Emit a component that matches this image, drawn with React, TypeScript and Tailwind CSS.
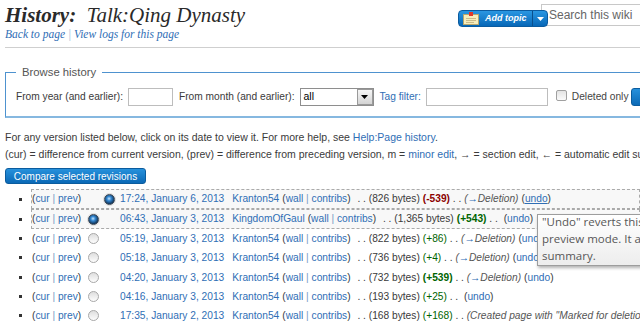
import React from 'react';

type Row = {
  date: string;
  user: string;
  size: string;
  diff: string;
  diffClass: string;
  comment?: 'section' | 'created';
  slots: ['none' | 'on' | 'off', 'none' | 'on' | 'off'];
  selected?: boolean;
  hoverUndo?: boolean;
};

const rows: Row[] = [
  {
    date: '17:24, January 6, 2013',
    user: 'Kranton54',
    size: '826 bytes',
    diff: '-539',
    diffClass: 'font-bold text-[#8b0000]',
    comment: 'section',
    slots: ['none', 'on'],
    selected: true,
    hoverUndo: true,
  },
  {
    date: '06:43, January 3, 2013',
    user: 'KingdomOfGaul',
    size: '1,365 bytes',
    diff: '+543',
    diffClass: 'font-bold text-[#006400]',
    slots: ['on', 'none'],
    selected: true,
  },
  {
    date: '05:19, January 3, 2013',
    user: 'Kranton54',
    size: '822 bytes',
    diff: '+86',
    diffClass: 'text-[#006400]',
    comment: 'section',
    slots: ['off', 'none'],
  },
  {
    date: '05:18, January 3, 2013',
    user: 'Kranton54',
    size: '736 bytes',
    diff: '+4',
    diffClass: 'text-[#006400]',
    comment: 'section',
    slots: ['off', 'none'],
  },
  {
    date: '04:20, January 3, 2013',
    user: 'Kranton54',
    size: '732 bytes',
    diff: '+539',
    diffClass: 'font-bold text-[#006400]',
    comment: 'section',
    slots: ['off', 'none'],
  },
  {
    date: '04:16, January 3, 2013',
    user: 'Kranton54',
    size: '193 bytes',
    diff: '+25',
    diffClass: 'text-[#006400]',
    slots: ['off', 'none'],
  },
  {
    date: '17:35, January 2, 2013',
    user: 'Kranton54',
    size: '168 bytes',
    diff: '+168',
    diffClass: 'text-[#006400]',
    comment: 'created',
    slots: ['off', 'none'],
  },
];

const link = 'text-[#2f6eb5]';

const Radio = ({ state }: { state: 'none' | 'on' | 'off' }) => {
  if (state === 'none') return null;
  if (state === 'on') {
    return (
      <span className="block h-[11px] w-[11px] rounded-full border border-[#3a4654] bg-[image:radial-gradient(circle_at_45%_40%,#c6e6ff_0%,#3488d2_30%,#12385f_70%)] shadow-[0_0_0_1px_#dcdcdc]" />
    );
  }
  return (
    <span className="block h-[11px] w-[11px] rounded-full border border-[#a8a8a8] bg-[image:linear-gradient(#dedede,#fdfdfd)]" />
  );
};

const NoteIcon = () => (
  <svg width="16" height="13" viewBox="0 0 16 13">
    <rect x="0.5" y="2.5" width="15" height="10" fill="#f7edbb" stroke="#b8a66c" />
    <path d="M3 6.5h10M3 8.5h10M3 10.5h8" stroke="#cbbb88" strokeWidth="1" />
    <rect x="6" y="0" width="4" height="4" fill="#e0382a" />
  </svg>
);

const HistoryRow = ({ row }: { row: Row }) => (
  <li className="flex items-center whitespace-nowrap">
    <span className="ml-[19px] mr-[9px] h-[3px] w-[3px] flex-none bg-[#333]" />
    <div
      className={`flex flex-1 items-center border border-dashed ${
        row.selected
          ? 'h-[20px] border-[#aaaaaa] bg-[#f8f8f8]'
          : 'h-[19.3px] border-transparent'
      }`}
    >
      <span className="w-[53px] flex-none">
        (<span className={link}>cur</span> <span className="text-[#7a9cc4]">|</span>{' '}
        <span className={link}>prev</span>)
      </span>
      <span className="flex w-[16px] flex-none justify-center">
        <Radio state={row.slots[0]} />
      </span>
      <span className="flex w-[16px] flex-none justify-center">
        <Radio state={row.slots[1]} />
      </span>
      <span className={`ml-[3px] ${link}`}>{row.date}</span>
      <span className={`ml-[8px] ${link}`}>{row.user}</span>
      <span className="ml-[3px]">
        (<span className={link}>wall</span> <span className="text-[#7a9cc4]">|</span>{' '}
        <span className={link}>contribs</span>)
      </span>
      <span className="ml-[4px] whitespace-pre"> . . </span>
      <span>({row.size})</span>
      <span className={`ml-[3px] ${row.diffClass}`}>({row.diff})</span>
      <span className="whitespace-pre"> . . </span>
      {row.comment === 'section' && (
        <span className="mr-[3px] italic text-[#555]">
          (<span className={link}>→</span>Deletion)
        </span>
      )}
      {row.comment === 'created' && (
        <span className="italic text-[#555]">
          (Created page with "Marked for deletion")
        </span>
      )}
      {row.comment !== 'created' && (
        <span className={row.comment ? '' : 'ml-[3px]'}>
          (<span className={`${link} ${row.hoverUndo ? 'underline' : ''}`}>undo</span>)
        </span>
      )}
    </div>
  </li>
);

export default function App() {
  return (
    <div className="relative h-[328px] w-[640px] overflow-hidden bg-white font-['Liberation_Sans',Arial,sans-serif] text-[10.2px] text-[#3a3a3a]">
      {/* page header */}
      <div className="ml-[5px] flex items-start border-b border-[#cfcfcf] pb-[6px]">
        <div className="flex-none font-['Liberation_Serif',serif] italic">
          <h1 className="mt-[3px] whitespace-nowrap text-[21px] leading-[24px] text-[#2a2a2a]">
            <b>History:</b>&nbsp; Talk:Qing Dynasty
          </h1>
          <div className="whitespace-nowrap text-[11.5px] leading-[14px]">
            <span className={link}>Back to page</span>{' '}
            <span className="text-[#9ab6d6]">|</span>{' '}
            <span className={link}>View logs for this page</span>
          </div>
        </div>

        <div className="ml-auto mr-[-20px] flex flex-none items-start">
          <div className="relative z-10 mt-[10px] flex h-[17px] w-[90px] overflow-hidden rounded-[4px] border border-[#0b5b9f] bg-[image:linear-gradient(#2a97e2,#0767b7)] text-white">
            <div className="flex w-[73px] items-center gap-[6px] whitespace-nowrap pl-[4px]">
              <NoteIcon />
              <span className="text-[9px] font-bold italic">Add topic</span>
            </div>
            <div className="flex flex-1 items-center justify-center border-l border-[#0a4f8c]">
              <svg width="7" height="4" viewBox="0 0 7 4">
                <path d="M0 0h7L3.5 4z" fill="#fff" />
              </svg>
            </div>
          </div>
          <div className="-ml-[7px] mt-[4px] h-[22px] w-[119px] border border-[#c8c8c8] bg-white pl-[7px] text-[12px] leading-[20px] text-[#666]">
            Search this wiki
          </div>
        </div>
      </div>

      {/* browse history form */}
      <fieldset className="ml-[5px] mt-[17px] w-[700px] border border-b-2 border-[#4e92cf] border-b-[#86b8e0] px-[10px] pb-[10px] pt-[9px]">
        <legend className="px-[6px] text-[11.3px] leading-[14px] text-[#555]">
          Browse history
        </legend>
        <div className="flex items-center whitespace-nowrap">
          <span>From year (and earlier):</span>
          <span className="ml-[5px] h-[18px] w-[45px] border border-[#bdbdbd] bg-white" />
          <span className="ml-[6px]">From month (and earlier):</span>
          <span className="ml-[5px] flex h-[18px] w-[74px] items-center border border-[#8e8e8e] bg-white">
            <span className="flex-1 pl-[3px] text-[10.5px] text-black">all</span>
            <span className="flex h-[16px] w-[16px] items-center justify-center border border-[#9a9a9a] bg-[image:linear-gradient(#f6f6f6,#d4d4d4)]">
              <svg width="7" height="4" viewBox="0 0 7 4">
                <path d="M0 0h7L3.5 4z" fill="#000" />
              </svg>
            </span>
          </span>
          <span className={`ml-[6px] ${link}`}>Tag filter:</span>
          <span className="ml-[5px] h-[18px] w-[122px] border border-[#bdbdbd] bg-white" />
          <span className="-mt-[3px] ml-[8px] h-[11px] w-[11px] rounded-[2px] border border-[#a0a0a0] bg-[image:linear-gradient(#e4e4e4,#fafafa)]" />
          <span className="ml-[5px] text-[#444]">Deleted only</span>
          <span className="ml-[3px] h-[18px] w-[60px] rounded-[3px] border border-[#0b5c9e] bg-[image:linear-gradient(#2791dc,#0b69b6)]" />
        </div>
      </fieldset>

      {/* help text */}
      <div className="ml-[5px] mt-[11px] whitespace-nowrap text-[10.5px] leading-[17px]">
        <div>
          For any version listed below, click on its date to view it. For more help, see{' '}
          <span className={link}>Help:Page history</span>.
        </div>
        <div>
          (cur) = difference from current version, (prev) = difference from preceding version, m ={' '}
          <span className={link}>minor edit</span>, → = section edit, ← = automatic edit summary
        </div>
      </div>

      <div className="ml-[5px] mt-[5px] flex h-[16px] w-[141px] items-center justify-center rounded-[3px] border border-[#0b5c9e] bg-[image:linear-gradient(#2791dc,#0b69b6)] text-[10px] text-white">
        Compare selected revisions
      </div>

      <ul className="mt-[5px]">
        {rows.map((row) => (
          <HistoryRow key={row.date} row={row} />
        ))}
      </ul>

      {/* tooltip over undo link */}
      <div className="absolute left-[537px] top-[214px] h-[52px] w-[130px] overflow-hidden border border-[#9d9d9d] bg-[image:linear-gradient(#ffffff,#ededed)] pl-[4px] font-['Open_Sans',sans-serif] text-[11.5px] leading-[17px] text-[#575757] shadow-[1px_2px_3px_rgba(0,0,0,0.3)]">
        <div className="-mt-[2px] whitespace-nowrap">
          <div>"Undo" reverts this edit and opens</div>
          <div>preview mode. It allows adding</div>
          <div>summary.</div>
        </div>
      </div>
    </div>
  );
}
